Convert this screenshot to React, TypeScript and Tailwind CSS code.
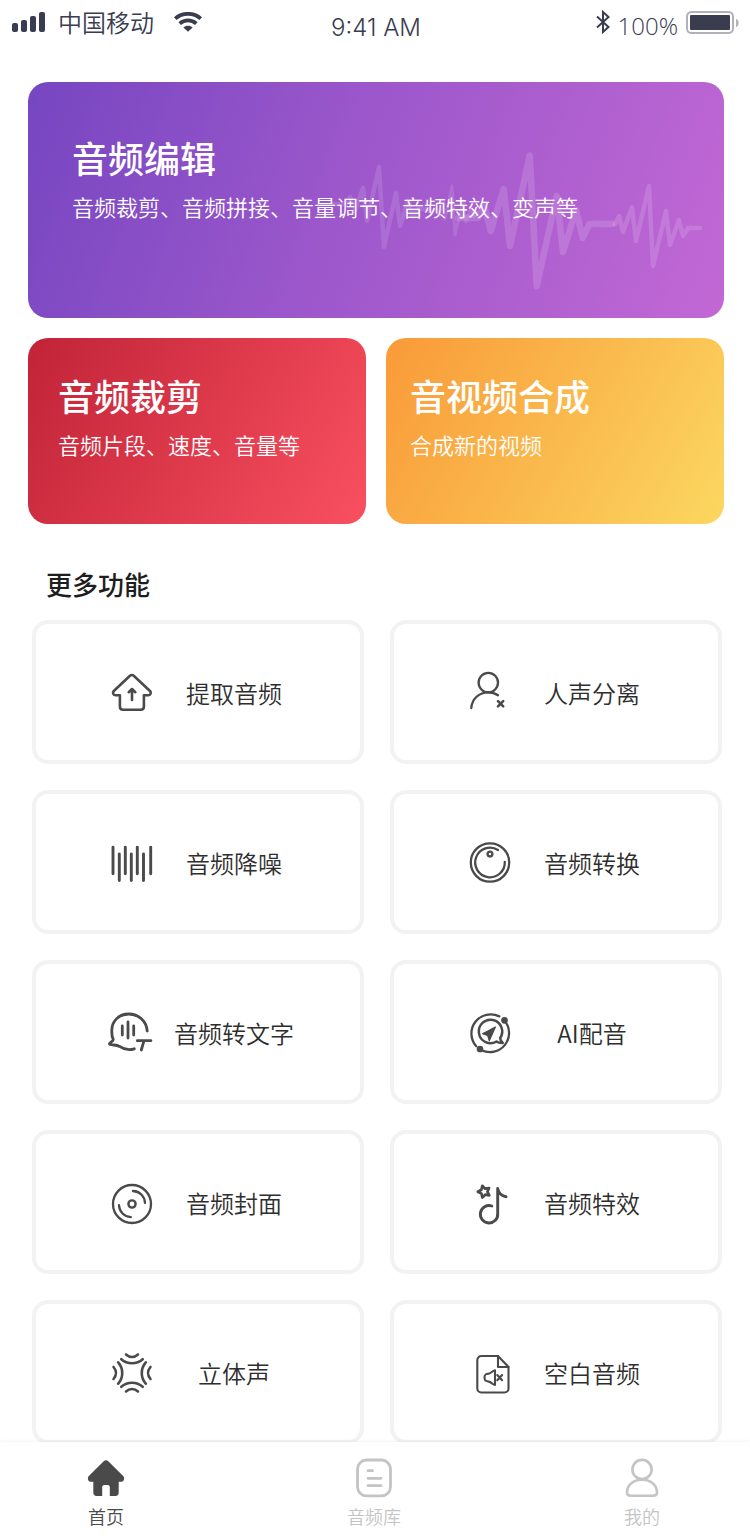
import type { ReactNode } from "react";

function Icon({ children, width = 2.4 }: { children: ReactNode; width?: number }) {
  return (
    <svg
      viewBox="0 0 44 44"
      className="size-11 shrink-0 overflow-visible"
      fill="none"
      stroke="currentColor"
      strokeWidth={width}
      strokeLinecap="round"
      strokeLinejoin="round"
      aria-hidden="true"
    >
      {children}
    </svg>
  );
}

const ExtractIcon = () => (
  <Icon width={2.6}>
    <path d="M19.700 5 3.800 20c-1.500 1.500-.7 4.200 1.500 4.200h4.600v11.300c0 2 1.200 3.200 3.200 3.200h17.600c2 0 3.200-1.200 3.200-3.200V24.200h4.600c2.200 0 3-2.700 1.500-4.200L24 5c-1.200-1.100-3.100-1.100-4.300 0Z" />
    <path d="M22 29V18.400M18.700 21.200 22 18l3.300 3.200" />
  </Icon>
);

const VoiceSplitIcon = () => (
  <Icon width={2.3}>
    <circle cx="20.300" cy="11.600" r="9.700" />
    <path d="M3.300 37C4 28 11 21.300 20.300 21.300c3.700 0 7 1 9.700 2.900" />
    <path d="m30 30.200 5.200 5.200M35.200 30.200 30 35.400" strokeWidth="2.600" />
  </Icon>
);

const DenoiseIcon = () => (
  <Icon width={2.9}>
    <path d="M3 6.300v26.500M15.300 6.300v26.500M27.300 6.300v26.500M40.700 6.300v26.500M9.300 13v26.500M21.300 13v26.500M33.500 13v26.500" />
  </Icon>
);

const ConvertIcon = () => (
  <Icon width={2.3}>
    <circle cx="22" cy="21.500" r="19.200" />
    <path d="M30 9A14.800 14.800 0 1 0 36.800 20.800" />
    <circle cx="22" cy="13.100" r="2.400" />
  </Icon>
);

const TranscribeIcon = () => (
  <Icon width={2.8}>
    <path d="M37.200 20C36.500 10 28.500 3 18.700 3 8.500 3 1.800 10.500 1.800 19.500c0 4-.2 6 1.400 8.800C3.500 30.500-.6 31.500-.6 33.100 3 34.500 6 33.500 9.500 35.400c5 3.500 9.500 4 14.800 2.400" />
    <path d="M12.300 15v9M18 11v16M23.700 15v9M27.300 29.700h13.600M34 29.700 31.300 39" />
  </Icon>
);

const DubbingIcon = () => (
  <Icon width={2.3}>
    <path d="M31.300 5.400A19.200 19.200 0 0 0 8.200 35.200M37.200 10.400A19.200 19.200 0 0 1 13.600 39.300" />
    <circle cx="36.500" cy="9.300" r="2.200" fill="currentColor" />
    <circle cx="12" cy="38" r="2.200" fill="currentColor" />
    <path d="M28.500 30.500A11.700 11.700 0 1 1 32.200 27c-.2 2 .8 3 2.600 4.900-2.300.2-4.200 0-6.300-1.400Z" strokeWidth="2.500" />
    <path d="M27.400 16 14.500 22.700l5.200 1.800 1.600 5.200Z" fill="currentColor" strokeWidth="1.200" />
  </Icon>
);

const CoverIcon = () => (
  <Icon width={2.3}>
    <circle cx="22" cy="23" r="19" />
    <circle cx="22" cy="23" r="3.600" strokeWidth="2.400" />
    <path d="M23 10c6.800.4 11.500 5 12 11.800M9 24.200c.4 6.800 5 11.500 11.800 12" />
  </Icon>
);

const EffectIcon = () => (
  <Icon width={2.9}>
    <path
      d="m14.300 4.800 2.800 2.900 4-.7-1.700 3.700 1.900 3.600-4.100-.6-2.900 2.900-.8-4-3.700-1.900 3.600-2Z"
      strokeWidth="2.700"
    />
    <path d="M23.800 25A8.700 8.700 0 1 0 29.700 32.500V7.500c1 4.800 4 7.600 8.300 8.200" />
  </Icon>
);

const StereoIcon = () => (
  <Icon width={2.6}>
    {[0, 90, 180, 270].map((turn) => (
      <g key={turn} transform={`rotate(${turn} 22 22)`}>
        <path d="M16 3.500c3.600 3.200 8.400 3.200 12 0M11.300 8.200c6.200 5.400 15.200 5.400 21.400 0" />
      </g>
    ))}
  </Icon>
);

const BlankIcon = () => (
  <Icon width={2.1}>
    <path d="M13 5h17l10.500 11v21.500a4 4 0 0 1-4 4H13.300a4 4 0 0 1-4-4V9A4 4 0 0 1 13.300 5Z" />
    <path d="M30 5v11h10.500" />
    <path d="M27 19.200v14.800c-1.700.2-4-3.200-6.300-3.400-3.300-.2-4.200-1.200-4.200-4s.9-3.800 4.200-4c2.300-.2 4.600-3.600 6.300-3.400ZM29.300 24l4.800 5.200M34.100 24l-4.800 5.200" />
  </Icon>
);

const HomeIcon = () => (
  <Icon width={0}>
    <path
      fill="currentColor"
      d="M19.700 5.200 4.600 20.200c-1.400 1.500-.6 5.500 1.700 5.500h3v11.100c0 2 1.200 3.200 3.200 3.200h5.700v-8.700c0-1.500.9-2.300 2.300-2.300h3c1.400 0 2.300.8 2.300 2.300V40h5.700c2 0 3.200-1.200 3.200-3.200V25.700h3c2.300 0 3.100-4 1.700-5.500L24.300 5.200c-1.400-1.300-3.200-1.300-4.600 0Z"
    />
  </Icon>
);

const LibraryIcon = () => (
  <Icon width={2.8}>
    <rect x="5.500" y="4" width="33" height="35.800" rx="9" />
    <path d="M16 14.700h4.500M16 22.300h13M16 29.700h13" />
  </Icon>
);

const ProfileIcon = () => (
  <Icon width={2.6}>
    <circle cx="22" cy="13.500" r="9.600" />
    <path d="M22 23.700c-9 0-15 5.500-15 13 0 2.200 1.200 3 4 3.100h22c2.800-.1 4-.9 4-3.100 0-7.500-6-13-15-13Z" />
  </Icon>
);

const features = [
  { label: "提取音频", icon: <ExtractIcon /> },
  { label: "人声分离", icon: <VoiceSplitIcon /> },
  { label: "音频降噪", icon: <DenoiseIcon /> },
  { label: "音频转换", icon: <ConvertIcon /> },
  { label: "音频转文字", icon: <TranscribeIcon /> },
  { label: "AI配音", icon: <DubbingIcon /> },
  { label: "音频封面", icon: <CoverIcon /> },
  { label: "音频特效", icon: <EffectIcon /> },
  { label: "立体声", icon: <StereoIcon /> },
  { label: "空白音频", icon: <BlankIcon /> },
];

const tabs = [
  { label: "首页", icon: <HomeIcon />, active: true },
  { label: "音频库", icon: <LibraryIcon />, active: false },
  { label: "我的", icon: <ProfileIcon />, active: false },
];

function StatusBar() {
  return (
    <header className="grid h-[50px] shrink-0 grid-cols-3 items-start pr-[10px] pl-3 text-2xl leading-7 text-[#3a3c50]">
      <div className="flex items-center gap-3 pt-2">
        <svg viewBox="0 0 34 20" className="h-5 w-[34px]" fill="currentColor" aria-hidden="true">
          <rect x="0" y="11" width="6" height="9" rx="2" />
          <rect x="9" y="8" width="6" height="12" rx="2" />
          <rect x="18" y="4" width="6" height="16" rx="2" />
          <rect x="27" y="0" width="6" height="20" rx="2" />
        </svg>
        <span className="font-[350]">中国移动</span>
        <svg viewBox="0 0 28 20" className="ml-2 h-5 w-7" fill="none" stroke="currentColor" strokeWidth="3.800" aria-hidden="true">
          <path d="M1.200 6.600c7.300-6.400 18.300-6.400 25.600 0" />
          <path d="M5.700 11.600c4.700-4.200 11.900-4.200 16.600 0" />
          <path d="M14 19.800 9.400 15.500c2.600-2.200 6.600-2.200 9.200 0Z" fill="currentColor" stroke="none" />
        </svg>
      </div>
      <div className="pt-[14px] text-center font-[Inter,sans-serif] font-light">9:41 AM</div>
      <div className="flex items-start justify-end gap-2">
        <svg viewBox="0 0 14 24" className="mt-[10px] h-6 w-[14px]" fill="none" stroke="currentColor" strokeWidth="2" aria-hidden="true">
          <path d="M1 6.500 12.500 17 7 22V2l5.500 5L1 17.500" />
        </svg>
        <span className="mt-3 font-['Open_Sans',sans-serif] font-[350]">100%</span>
        <svg viewBox="0 0 54 24" className="mt-[11px] h-6 w-[54px]" aria-hidden="true">
          <rect x="1" y="1" width="46" height="21" rx="4.500" fill="none" stroke="#b0b1b9" strokeWidth="2" />
          <rect x="4" y="4" width="40" height="15" rx="1" fill="#3a3c50" />
          <path d="M50 8c3.500 1 3.500 7 0 8Z" fill="#b0b1b9" />
        </svg>
      </div>
    </header>
  );
}

function Waveform() {
  return (
    <svg
      viewBox="28 82 696 236"
      preserveAspectRatio="xMaxYMid meet"
      className="absolute inset-0 size-full"
      fill="none"
      stroke="#ffffff"
      strokeLinecap="round"
      strokeLinejoin="round"
      aria-hidden="true"
    >
      <path strokeOpacity=".12" strokeWidth="4.500" d="M334 204h12l4-7 5 14 8-23 4 33 12-54 5 80 12-54 4 33 8-25 5 16 5-8h10" />
      <path strokeOpacity=".12" strokeWidth="3" d="M428 211h5l3-5 3 10 4-16 2 19 7-33 3 49 8-34 3 21 5-15 3 10 3-5" />
      <path
        strokeOpacity=".14"
        strokeWidth="6.500"
        d="M458 218H478L484 205 490.700 231 503.700 189 510 246 529.700 155.500 536.700 286 556.700 196 563 252 576 210 582.700 238 589.500 224H612"
      />
      <path strokeOpacity=".14" strokeWidth="4.500" d="M615 224l4-8 4 16 9-25 4 34 13-55 4 80 13-55 4 34 9-25 4 16 5-8h12" />
    </svg>
  );
}

function CardText({ title, text }: { title: string; text: string }) {
  return (
    <>
      <span className="relative text-4xl leading-[48px] font-medium">{title}</span>
      <span className="relative mt-[10px] text-[22px] leading-[30px] font-[350]">{text}</span>
    </>
  );
}

export default function App() {
  return (
    <div className="flex h-screen flex-col bg-white font-['Noto_Sans_CJK_SC','Noto_Sans',sans-serif] text-[#2e2e2e]">
      <StatusBar />
      <main className="min-h-0 flex-1 overflow-y-auto pt-8 pr-[26px] pl-7 [scrollbar-width:none]">
        <button
          type="button"
          className="relative flex h-[236px] w-full flex-col items-start overflow-hidden rounded-[20px] bg-[linear-gradient(110deg,#7646c1,#9c57cb_45%,#c268d5)] px-11 pt-[51px] text-left text-white"
        >
          <Waveform />
          <CardText title="音频编辑" text="音频裁剪、音频拼接、音量调节、音频特效、变声等" />
        </button>
        <div className="mt-5 grid grid-cols-2 gap-5">
          <button
            type="button"
            className="flex h-[186px] flex-col items-start rounded-[20px] bg-[linear-gradient(120deg,#c12337,#f95060)] px-[30px] pt-[33px] text-left text-white"
          >
            <CardText title="音频裁剪" text="音频片段、速度、音量等" />
          </button>
          <button
            type="button"
            className="flex h-[186px] flex-col items-start rounded-[20px] bg-[linear-gradient(120deg,#f99a38,#fbd760)] px-6 pt-[33px] text-left text-white"
          >
            <CardText title="音视频合成" text="合成新的视频" />
          </button>
        </div>
        <h2 className="mt-10 px-[18px] text-[26px] leading-10 font-medium text-[#1e1e1e]">更多功能</h2>
        <div className="mt-4 grid grid-cols-2 gap-[26px] pr-[2px] pb-7 pl-1">
          {features.map((item) => (
            <button
              key={item.label}
              type="button"
              className="flex h-36 items-center justify-center gap-5 rounded-2xl border-4 border-[#f2f2f2] bg-white pt-[2px] pl-2"
            >
              <span className="text-[#4a4a4a]">{item.icon}</span>
              <span className="w-[120px] text-center text-2xl leading-9 font-[350] whitespace-nowrap">{item.label}</span>
            </button>
          ))}
        </div>
      </main>
      <nav className="z-10 flex h-[98px] shrink-0 justify-between bg-white pt-[14px] pr-[78px] pl-[76px] shadow-[0_-1px_3px_rgba(0,0,0,0.05)]">
        {tabs.map((tab) => (
          <a
            key={tab.label}
            href="#"
            aria-current={tab.active ? "page" : undefined}
            className={`flex w-[60px] flex-col items-center gap-1 text-lg leading-6 font-[350] whitespace-nowrap ${tab.active ? "text-[#4a4a4a]" : "text-[#c4c4c4]"}`}
          >
            {tab.icon}
            {tab.label}
          </a>
        ))}
      </nav>
    </div>
  );
}
